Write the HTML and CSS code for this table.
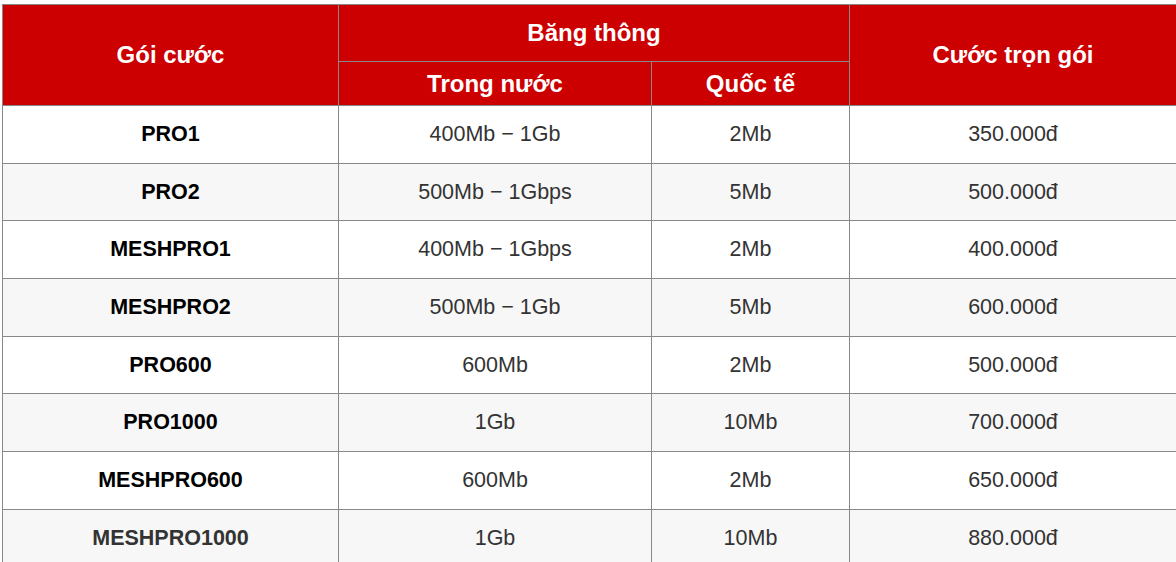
FILE: index.html
```html
<!DOCTYPE html>
<html lang="vi">
<head>
<meta charset="utf-8">
<title>Bảng giá gói cước</title>
<link rel="stylesheet" href="styles.css">
</head>
<body>
<table class="price-table">
  <colgroup>
    <col class="c1"><col class="c2"><col class="c3"><col class="c4">
  </colgroup>
  <thead>
    <tr class="head-top">
      <th rowspan="2">Gói cước</th>
      <th colspan="2">Băng thông</th>
      <th rowspan="2">Cước trọn gói</th>
    </tr>
    <tr class="head-sub">
      <th>Trong nước</th>
      <th>Quốc tế</th>
    </tr>
  </thead>
  <tbody>
    <tr><td class="name">PRO1</td><td>400Mb − 1Gb</td><td>2Mb</td><td>350.000đ</td></tr>
    <tr><td class="name">PRO2</td><td>500Mb − 1Gbps</td><td>5Mb</td><td>500.000đ</td></tr>
    <tr><td class="name">MESHPRO1</td><td>400Mb − 1Gbps</td><td>2Mb</td><td>400.000đ</td></tr>
    <tr><td class="name">MESHPRO2</td><td>500Mb − 1Gb</td><td>5Mb</td><td>600.000đ</td></tr>
    <tr><td class="name">PRO600</td><td>600Mb</td><td>2Mb</td><td>500.000đ</td></tr>
    <tr><td class="name">PRO1000</td><td>1Gb</td><td>10Mb</td><td>700.000đ</td></tr>
    <tr><td class="name">MESHPRO600</td><td>600Mb</td><td>2Mb</td><td>650.000đ</td></tr>
    <tr class="last"><td class="name">MESHPRO1000</td><td>1Gb</td><td>10Mb</td><td>880.000đ</td></tr>
  </tbody>
</table>
</body>
</html>
```

FILE: styles.css
```css
html, body {
  margin: 0;
  padding: 0;
  background: #fff;
}

body {
  font-family: "Liberation Sans", Arial, sans-serif;
  padding: 4px 0 0 2px;
}

.price-table {
  width: 1174px;
  border-collapse: collapse;
  table-layout: fixed;
}

.c1 { width: 336px; }
.c2 { width: 313px; }
.c3 { width: 198px; }
.c4 { width: 327px; }

.price-table th,
.price-table td {
  border: 1px solid #888;
  text-align: center;
  vertical-align: middle;
  padding: 0;
}

.price-table th {
  background: #cc0000;
  color: #fff;
  font-size: 24px;
  font-weight: bold;
}

.head-top th { height: 56px; }
.head-sub th { height: 43px; }

.price-table td {
  height: 56.7px;
  font-size: 21.5px;
  color: #333;
}

.price-table tbody tr:nth-child(even) td {
  background: #f7f7f7;
}

.price-table td.name {
  font-weight: bold;
  color: #000;
}

.price-table tr.last td.name {
  color: #333;
}
```
